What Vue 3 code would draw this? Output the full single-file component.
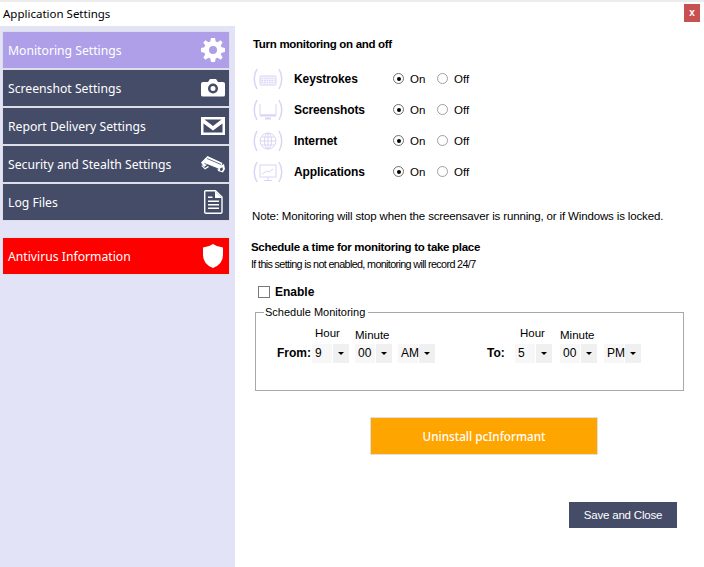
<script setup>
import { ref } from 'vue';

const navItems = [
	{ label: 'Monitoring Settings', icon: 'gear', active: true },
	{ label: 'Screenshot Settings', icon: 'camera' },
	{ label: 'Report Delivery Settings', icon: 'mail' },
	{ label: 'Security and Stealth Settings', icon: 'cctv' },
	{ label: 'Log Files', icon: 'doc' },
];

const monitors = ref([
	{ name: 'Keystrokes', icon: 'keyboard', value: 'on' },
	{ name: 'Screenshots', icon: 'screen', value: 'on' },
	{ name: 'Internet', icon: 'globe', value: 'on' },
	{ name: 'Applications', icon: 'apps', value: 'on' },
]);

const enabled = ref(false);

const ranges = [
	{ label: 'From:', hour: '9', minute: '00', period: 'AM', cls: 'from' },
	{ label: 'To:', hour: '5', minute: '00', period: 'PM', cls: 'to' },
];
</script>

<template>
	<div class="window">
		<header class="titlebar">
			<span>Application Settings</span>
			<button class="close">x</button>
		</header>
		<div class="body">
			<aside class="sidebar">
				<a
					v-for="item in navItems"
					:key="item.label"
					class="nav"
					:class="{ active: item.active }">
					<span>{{ item.label }}</span>
					<svg class="nav-icon" viewBox="0 0 24 24" fill="#fff">
						<path
							v-if="item.icon === 'gear'"
							fill-rule="evenodd"
							d="M10 0h4l.7 3.4 1.9.8L19.500 2.300l2.200 2.200-1.900 2.900.8 1.900 3.400.7v4l-3.400.7-.8 1.900 1.900 2.900-2.200 2.200-2.900-1.900-1.900.8L14 24h-4l-.7-3.400-1.900-.8-2.900 1.900-2.200-2.200 1.900-2.900-.8-1.900L0 14v-4l3.400-.7.8-1.900-1.900-2.900 2.200-2.200 2.900 1.900 1.900-.8zM12 8a4 4 0 1 0 0 8 4 4 0 0 0 0-8z" />
						<path
							v-else-if="item.icon === 'camera'"
							fill-rule="evenodd"
							d="M2 6h5l2-3h6l2 3h5q2 0 2 2v11q0 1.500-2 1.500H2q-2 0-2-1.500V8q0-2 2-2zM12 7.500a5 5 0 1 0 0 10 5 5 0 0 0 0-10zM12 10a2.500 2.500 0 1 1 0 5 2.500 2.500 0 0 1 0-5z" />
						<path
							v-else-if="item.icon === 'mail'"
							fill-rule="evenodd"
							d="M0 3h24v18H0zM3.500 5.500 12 12 20.500 5.500zM2.500 9.500v9h19v-9L12 16.500z" />
						<g v-else-if="item.icon === 'cctv'">
							<path d="M0 10.500 6.500 4l15 7-1 2.500-3 3.500-11-4.500-3.500 2.500z" />
							<path d="M1 13l3 3 3-2 1 1-4 2.500-3.500-3.500z" />
							<path
								fill-rule="evenodd"
								d="M16 15.500 23 12l1 5-2 3.500-5-1.500zM19 16.500v2l2 .5.8-1.500-.300-2.200z" />
							<path fill="none" stroke="#454c68" stroke-width=".8" d="M3.500 11.500l14 5.500M6 6.500l14 6" />
						</g>
						<g v-else-if="item.icon === 'doc'">
							<path
								fill="none"
								stroke="#fff"
								stroke-width="1.400"
								d="M4.500.8H14.500L21 7v15q0 1.300-1.300 1.300H5q-1.300 0-1.300-1.300V2q0-1.200.8-1.200z" />
							<path d="M14 1v7h7zM7 6.500h4.500V8H7zM7 10.500h11V12H7zM7 14h11v1.500H7zM7 17.500h11V19H7z" />
						</g>
					</svg>
				</a>
				<a class="nav danger">
					<span>Antivirus Information</span>
					<svg class="nav-icon" viewBox="0 0 24 24" fill="#fff">
						<path d="M12 0q4 3 10 3.500V11q0 9-10 13Q2 20 2 11V3.500Q8 3 12 0z" />
					</svg>
				</a>
			</aside>

			<main class="content">
				<h3 class="heading">Turn monitoring on and off</h3>
				<div class="monitors">
					<div
						v-for="m in monitors"
						:key="m.name"
						class="monitor">
						<svg class="feature-icon" viewBox="0 0 32 22" fill="none" stroke="#d9d5f5">
							<path stroke-width="1.500" d="M5 1Q-.5 11 5 21M27 1q5.500 10 0 20" />
							<g v-if="m.icon === 'keyboard'">
								<rect x="8" y="8" width="16" height="9" rx="1" fill="#f4f3fc" />
								<path stroke-dasharray="1.500 1" d="M9.500 10.500h13M9.500 12.500h13M9.500 14.500h13" />
							</g>
							<g v-else-if="m.icon === 'screen'">
								<path d="M8 5v11h16V5" />
								<path stroke-width="2" d="M8 16.500h16M13 19.500h6" />
							</g>
							<g v-else-if="m.icon === 'globe'">
								<circle cx="16" cy="11" r="8" />
								<ellipse cx="16" cy="11" rx="3.500" ry="8" />
								<path d="M8 11h16M9.500 7h13M9.500 15h13M16 3v16" />
							</g>
							<g v-else>
								<rect x="8" y="4" width="16" height="12" />
								<path d="M10 13l5-3 2 1 4-3M16 16v3M12 19.500h8" />
							</g>
						</svg>
						<span class="monitor-name">{{ m.name }}</span>
						<label class="radio">
							<input v-model="m.value" type="radio" :name="m.name" value="on" />
							On
						</label>
						<label class="radio">
							<input v-model="m.value" type="radio" :name="m.name" value="off" />
							Off
						</label>
					</div>
				</div>

				<p class="note">Note: Monitoring will stop when the screensaver is running, or if Windows is locked.</p>

				<h3 class="heading schedule-heading">Schedule a time for monitoring to take place</h3>
				<p class="sub">If this setting is not enabled, monitoring will record 24/7</p>

				<label class="enable">
					<input v-model="enabled" type="checkbox" />
					Enable
				</label>

				<fieldset class="schedule">
					<legend>Schedule Monitoring</legend>
					<div class="ranges">
						<div
							v-for="r in ranges"
							:key="r.label"
							class="range"
							:class="r.cls">
							<span class="range-label">{{ r.label }}</span>
							<div class="field">
								<span class="cap">Hour</span>
								<div class="combo">
									<span class="val">{{ r.hour }}</span>
									<span class="arrow"></span>
								</div>
							</div>
							<div class="field">
								<span class="cap minute">Minute</span>
								<div class="combo">
									<span class="val">{{ r.minute }}</span>
									<span class="arrow"></span>
								</div>
							</div>
							<div class="field">
								<div class="combo">
									<span class="val">{{ r.period }}</span>
									<span class="arrow"></span>
								</div>
							</div>
						</div>
					</div>
				</fieldset>

				<button class="uninstall">Uninstall pcInformant</button>
				<button class="save">Save and Close</button>
			</main>
		</div>
	</div>
</template>

<style>
html,
body {
	margin: 0;
	overflow: hidden;
	background: #fff;
}
</style>

<style scoped>
.window {
	width: 704px;
	height: 567px;
	display: flex;
	flex-direction: column;
	box-sizing: border-box;
	border-top: 2px solid #ececec;
	font-family: "Liberation Sans", Arial, sans-serif;
	font-size: 12px;
	color: #000;
}

.titlebar {
	height: 24px;
	flex: none;
	box-sizing: border-box;
	display: flex;
	justify-content: space-between;
	align-items: center;
	padding: 0 4px 2px 3px;
	font-family: "Noto Sans", sans-serif;
	font-size: 11.500px;
}

.close {
	align-self: flex-start;
	width: 16px;
	height: 18px;
	margin-top: 2px;
	padding: 0 0 2px;
	border: none;
	background: #c75050;
	color: #fff;
	font-family: "Liberation Sans", sans-serif;
	font-weight: bold;
	font-size: 10px;
}

.body {
	flex: 1;
	display: flex;
	min-height: 0;
}

.sidebar {
	width: 235px;
	flex: none;
	box-sizing: border-box;
	padding: 6px 6px 0 3px;
	display: flex;
	flex-direction: column;
	gap: 2px;
	background: #e3e3f7;
}

.nav {
	height: 36px;
	display: flex;
	align-items: center;
	justify-content: space-between;
	padding: 0 4px 0 5px;
	background: #454c68;
	box-shadow: 0 0 0 1px #dedee8;
	color: #fff;
	font-family: "Noto Sans", sans-serif;
	font-size: 12.200px;
}

.nav.active {
	background: #ae9fe8;
}

.nav.danger {
	margin-top: 16px;
	background: #f00;
}

.nav-icon {
	width: 24px;
	height: 24px;
}

.content {
	position: relative;
	flex: 1;
	box-sizing: border-box;
	padding: 10px 20px 0 18px;
}

.heading {
	margin: 0;
	font-size: 11.500px;
	letter-spacing: -0.3px;
	line-height: 16px;
	font-weight: bold;
}

.monitors {
	margin-top: 11px;
}

.monitor {
	height: 31px;
	display: flex;
	align-items: center;
}

.feature-icon {
	width: 32px;
	height: 22px;
	margin-left: -1px;
	flex: none;
}

.monitor-name {
	width: 99px;
	margin-left: 10px;
	font-weight: bold;
	letter-spacing: -0.1px;
}

.radio {
	width: 44px;
	display: flex;
	align-items: center;
	gap: 6px;
	font-size: 11.500px;
}

.radio input {
	appearance: none;
	width: 11px;
	height: 11px;
	margin: 0;
	border: 1px solid #a0a0a0;
	border-radius: 50%;
	background: #fff;
	box-sizing: border-box;
	display: grid;
	place-items: center;
}

.radio input:checked {
	border-color: #707070;
}

.radio input:checked::after {
	content: "";
	width: 4px;
	height: 4px;
	border-radius: 50%;
	background: #000;
}

.note {
	margin: 21px 0 0 -1px;
	font-size: 11.500px;
	letter-spacing: -0.15px;
	line-height: 16px;
	white-space: nowrap;
}

.schedule-heading {
	margin: 15px 0 0 -2px;
}

.sub {
	margin: 1px 0 0 -2px;
	font-size: 10.800px;
	letter-spacing: -0.65px;
	line-height: 16px;
	white-space: nowrap;
}

.enable {
	margin: 12px 0 0 5px;
	display: flex;
	align-items: center;
	gap: 5px;
	height: 16px;
	font-weight: bold;
}

.enable input {
	appearance: none;
	width: 12px;
	height: 12px;
	margin: 0;
	border: 1px solid #777;
	background: #fff;
	box-sizing: border-box;
}

.schedule {
	margin: 5px 0 0 2px;
	padding: 0;
	height: 86px;
	box-sizing: border-box;
	border: 1px solid #a8a8a8;
	width: 429px;
}

.schedule legend {
	margin-left: 8px;
	padding: 0 3px 0 1px;
	font-size: 11px;
	line-height: 14px;
}

.ranges {
	display: flex;
	padding-top: 7px;
}

.range {
	display: flex;
	align-items: flex-end;
}

.range.from {
	width: 231px;
	padding-left: 21px;
	box-sizing: border-box;
}

.range-label {
	font-weight: bold;
	font-size: 12px;
	line-height: 19px;
}

.from .range-label {
	width: 35px;
}

.to .range-label {
	width: 28px;
}

.field {
	display: flex;
	flex-direction: column;
	margin-right: 6px;
}

.to .field {
	margin-right: 8px;
}

.to .field:nth-child(3) {
	margin-right: 7px;
}

.cap {
	padding-left: 3px;
	font-size: 11.500px;
	line-height: 14px;
	margin-bottom: 4px;
}

.cap.minute {
	padding-left: 0;
	margin-bottom: 2px;
}

.to .cap {
	padding-left: 5px;
}

.to .cap.minute {
	padding-left: 0;
}

.combo {
	display: flex;
	gap: 1px;
	height: 19px;
	width: 37px;
}

.val {
	width: 17px;
	padding-left: 3px;
	background: #f7f7f7;
	line-height: 19px;
}

.arrow {
	width: 16px;
	background: #f0f0f0;
	position: relative;
}

.arrow::after {
	content: "";
	position: absolute;
	left: 5px;
	top: 8px;
	border: 3px solid transparent;
	border-top: 3px solid #000;
	border-bottom: none;
}

.uninstall {
	display: block;
	width: 228px;
	height: 38px;
	margin: 26px 0 0 117px;
	border: 1px solid #e0e0e0;
	background: #ffa500;
	color: #fff;
	font-family: "Noto Sans", sans-serif;
	font-size: 11.700px;
	font-weight: 500;
}

.save {
	display: block;
	width: 108px;
	height: 26px;
	margin: 47px 0 0 316px;
	padding: 0;
	border: none;
	background: #454c68;
	color: #fff;
	font-family: "Liberation Sans", sans-serif;
	font-size: 11.500px;
	letter-spacing: -0.2px;
}
</style>
